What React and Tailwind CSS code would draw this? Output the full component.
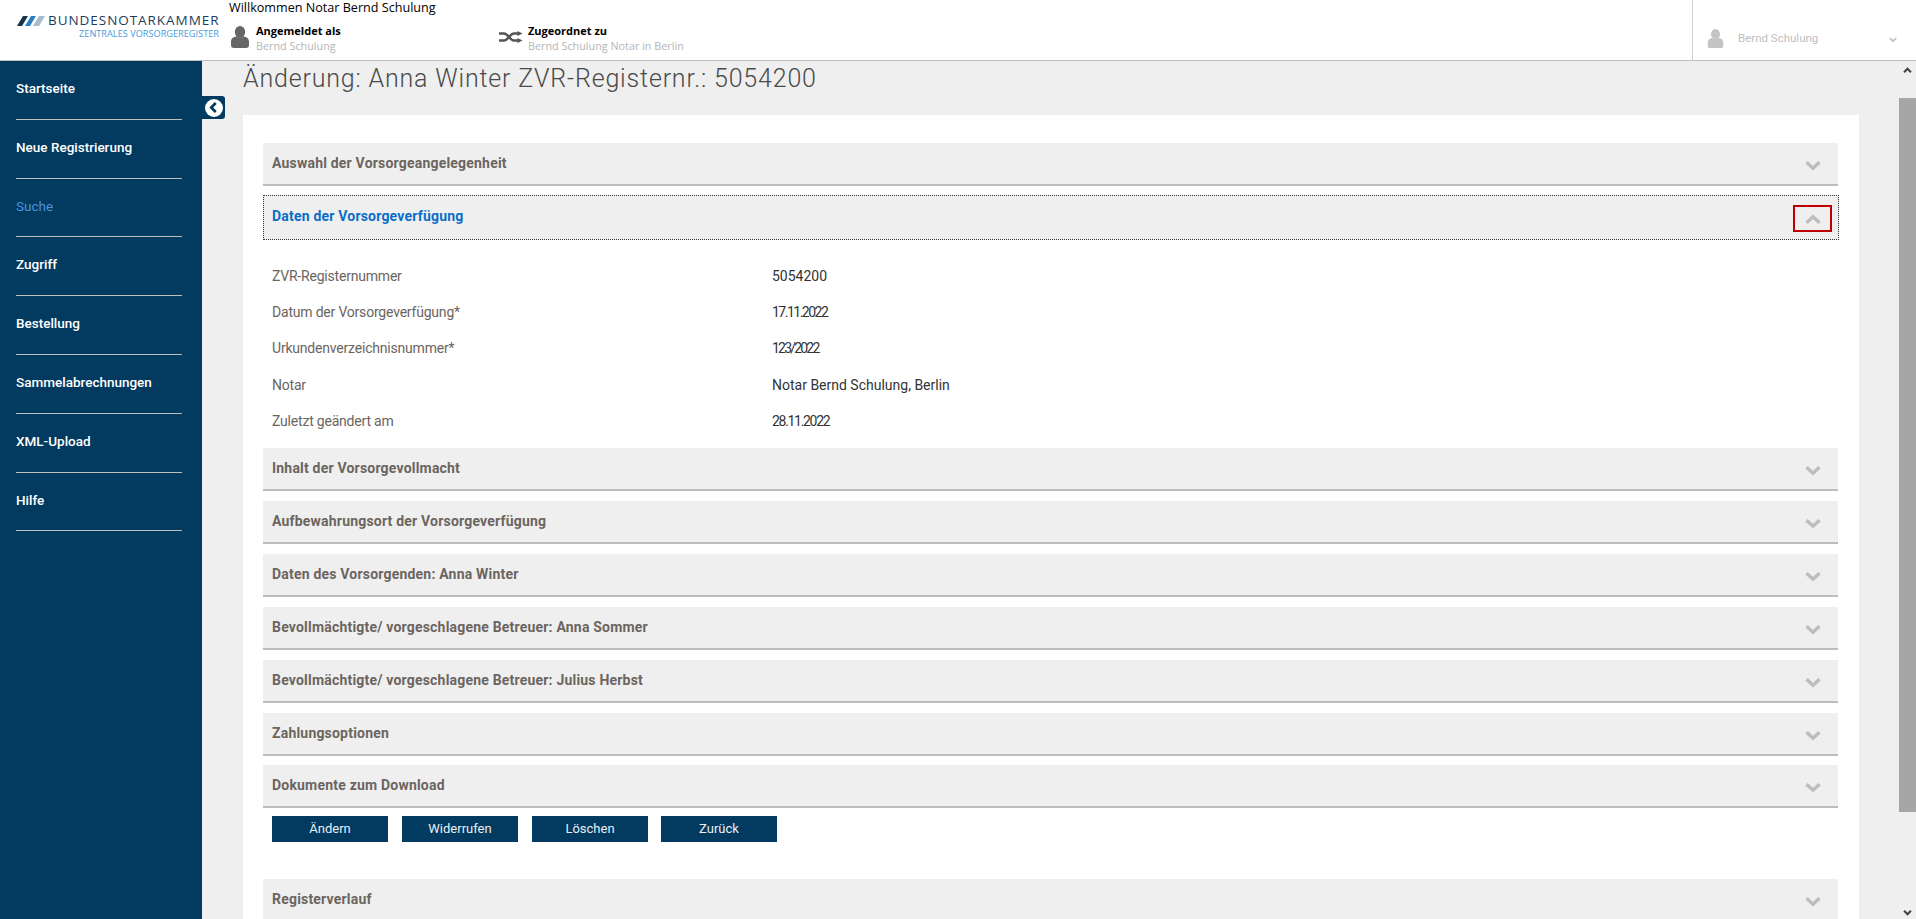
import React from "react";

const F = "font-['Roboto','Noto_Sans',sans-serif]";
const OS = "font-['Open_Sans',sans-serif]";

function Person({ className }) {
  return (
    <svg viewBox="0 0 18 22" className={className} fill="currentColor">
      <ellipse cx="9" cy="6" rx="5.2" ry="6" />
      <path d="M0 15.500c0-3 2.500-4.500 5-5 2.300 1.500 5.700 1.500 8 0 2.500.5 5 2 5 5V19c0 2-1 3-3 3H3c-2 0-3-1-3-3z" />
    </svg>
  );
}

function Shuffle({ className }) {
  return (
    <svg viewBox="0 0 24 12" className={className} fill="none" stroke="currentColor" strokeWidth="2.500">
      <path d="M0 2.500h5c4 0 6 7 10 7h4" />
      <path d="M0 9.500h5c4 0 6-7 10-7h4" />
      <path d="M18.500 0l5 2.500-5 2.500zM18.500 7l5 2.500-5 2.500z" fill="currentColor" stroke="none" />
    </svg>
  );
}

function Chevron({ up, className }) {
  return (
    <svg viewBox="0 0 16 10" className={className} fill="none" stroke="currentColor" strokeWidth="3.500">
      <path d={up ? "M1.500 8.800L8 2.800l6.500 6" : "M1.500 1.200L8 7.200l6.500-6"} />
    </svg>
  );
}

function Logo() {
  return (
    <div className="w-[221px] pl-[17px] pt-[12px] shrink-0">
      <div className="flex items-center gap-[3px] h-[17px]">
        <svg viewBox="0 0 28 10" className="w-[28px] h-[10px] shrink-0">
          <path d="M6 0h5L5 10H0z" fill="#14344f" />
          <path d="M14 0h5l-6 10H8z" fill="#2a7dc0" />
          <path d="M22 0h6l-6 10h-6z" fill="#a9bcc9" />
        </svg>
        <span className={`text-[13.500px] leading-none tracking-[0.95px] font-medium text-[#1c3e5c] whitespace-nowrap ${OS}`}>BUNDESNOTARKAMMER</span>
      </div>
      <div className={`text-right pr-[2px] text-[9.200px] leading-none text-[#4a9ad9] whitespace-nowrap ${OS}`}>ZENTRALES VORSORGEREGISTER</div>
    </div>
  );
}

function Header() {
  return (
    <header className="h-[61px] shrink-0 flex bg-white border-b border-[#bdbdbd]">
      <Logo />
      <div className={`flex-1 pl-[8px] min-w-0 ${OS}`}>
        <div className="text-[12.600px] leading-[16px] text-black">Willkommen Notar Bernd Schulung</div>
        <div className="flex mt-[8px]">
          <div className="w-[270px] flex gap-[7px] pl-[2px]">
            <Person className="w-[18px] h-[22px] text-[#666] mt-[2px]" />
            <div>
              <div className="text-[11px] leading-[14px] font-bold text-black">Angemeldet als</div>
              <div className="text-[10.800px] leading-[16px] text-[#b5b5b5]">Bernd Schulung</div>
            </div>
          </div>
          <div className="flex gap-[5px]">
            <Shuffle className="w-[24px] h-[12px] text-[#555] mt-[7px]" />
            <div>
              <div className="text-[11px] leading-[14px] font-bold text-black">Zugeordnet zu</div>
              <div className="text-[10.800px] leading-[16px] text-[#b5b5b5]">Bernd Schulung Notar in Berlin</div>
            </div>
          </div>
        </div>
      </div>
      <div className="w-[224px] shrink-0 border-l border-[#d0d0d0] flex items-center pl-[14px] pr-[19px] pt-[17px]">
        <Person className="w-[17px] h-[19px] text-[#c4c4c4]" />
        <span className="ml-[14px] text-[11.500px] text-[#c0c0c0] flex-1">Bernd Schulung</span>
        <Chevron className="w-[8px] h-[6px] text-[#bdbdbd] mt-[3px]" />
      </div>
    </header>
  );
}

const menu = ["Startseite", "Neue Registrierung", "Suche", "Zugriff", "Bestellung", "Sammelabrechnungen", "XML-Upload", "Hilfe"];

function Sidebar() {
  return (
    <nav className="w-[202px] shrink-0 bg-[#033a5f] pl-[16px] pr-[20px]">
      {menu.map((m) => (
        <div key={m} className="h-[58.800px] border-b border-[#bdbdbd] pt-[15px]">
          <span className={`text-[13.500px] leading-[20px] font-medium ${m === "Suche" ? "text-[#4a94dc] font-normal" : "text-white"}`}>{m}</span>
        </div>
      ))}
    </nav>
  );
}

function AccordionHead({ title, open, className = "" }) {
  return (
    <div className={`flex items-center justify-between ${open ? "h-[45px] border border-dotted border-[#333] mb-[8px] w-[1576px] pl-[8px]" : "h-[43px] border-b-2 border-[#bdbdbd] pl-[9px]"} bg-[#efefef] pr-[17px] ${className}`}>
      <span className={`text-[14px] font-bold tracking-[0.2px] ${open ? "text-[#0a6ec8] -mt-[2px]" : "text-[#6b6560]"}`}>{title}</span>
      {open ? (
        <div className="w-[39px] h-[27px] border-2 border-[#c00000] flex items-center justify-center -mr-[11px] mt-[2px]">
          <Chevron up className="w-[16px] h-[10px] text-[#bdbdbd]" />
        </div>
      ) : (
        <Chevron className="w-[16px] h-[10px] text-[#bdbdbd] mt-[5px]" />
      )}
    </div>
  );
}

const rows = [
  ["ZVR-Registernummer", "5054200", ""],
  ["Datum der Vorsorgeverfügung*", "17.11.2022", "tracking-[-1.5px]"],
  ["Urkundenverzeichnisnummer*", "123/2022", "tracking-[-1.8px]"],
  ["Notar", "Notar Bernd Schulung, Berlin", ""],
  ["Zuletzt geändert am", "28.11.2022", "tracking-[-1.3px]"],
];

const others = [
  ["Aufbewahrungsort der Vorsorgeverfügung", "mt-[10px]"],
  ["Daten des Vorsorgenden: Anna Winter", "mt-[10px]"],
  ["Bevollmächtigte/ vorgeschlagene Betreuer: Anna Sommer", "mt-[10px]"],
  ["Bevollmächtigte/ vorgeschlagene Betreuer: Julius Herbst", "mt-[10px]"],
  ["Zahlungsoptionen", "mt-[10px]"],
  ["Dokumente zum Download", "mt-[9px]"],
];

function Main() {
  return (
    <main className="flex-1 min-w-0 bg-[#efefef] relative overflow-hidden pl-[41px] pr-[40px]">
      <button className="absolute left-0 top-[35px] w-[23px] h-[23px] bg-[#033a5f] rounded-r-[3px] flex items-center justify-center">
        <span className="w-[18px] h-[18px] rounded-full bg-white flex items-center justify-center">
          <svg viewBox="0 0 10 12" className="w-[9px] h-[11px]" fill="none" stroke="#033a5f" strokeWidth="3"><path d="M7.500 1L2.500 6l5 5" /></svg>
        </span>
      </button>
      <h1 className="text-[25px] leading-[36px] font-light text-[#4a4a4a] tracking-[0.82px] whitespace-nowrap">Änderung: Anna Winter ZVR-Registernr.: 5054200</h1>
      <section className="bg-white mt-[18px] pt-[28px] pl-[20px] pr-[21px]">
        <AccordionHead title="Auswahl der Vorsorgeangelegenheit" className="mb-[9px]" />
        <AccordionHead title="Daten der Vorsorgeverfügung" open />
        <div className="pt-[10px]">
          {rows.map(([k, v, t]) => (
            <div key={k} className="flex h-[36.300px] items-center pl-[9px] text-[14px]">
              <span className="w-[500px] text-[#6b6560] tracking-[-0.2px]">{k}</span>
              <span className={`text-[#333] ${t}`}>{v}</span>
            </div>
          ))}
        </div>
        <AccordionHead title="Inhalt der Vorsorgevollmacht" className="mt-[8.500px]" />
        {others.map(([t, m]) => (
          <AccordionHead key={t} title={t} className={m} />
        ))}
        <div className="flex pl-[9px] mt-[8px] mb-[37px]">
          {[["Ändern", "mr-[14px]"], ["Widerrufen", "mr-[14px]"], ["Löschen", "mr-[13px]"], ["Zurück", ""]].map(([b, m]) => (
            <button key={b} className={`w-[116px] h-[26px] bg-[#033a5f] text-[#e8f0f5] text-[13px] ${m}`}>{b}</button>
          ))}
        </div>
        <AccordionHead title="Registerverlauf" />
      </section>
    </main>
  );
}

function Scrollbar() {
  return (
    <aside className="w-[17px] shrink-0 bg-[#efefef] flex flex-col items-center">
      <svg viewBox="0 0 10 7" className="w-[9px] h-[6px] mt-[6px] text-[#444]" fill="none" stroke="currentColor" strokeWidth="2.500"><path d="M1 6l4-4 4 4" /></svg>
      <div className="w-full h-[714px] mt-[25px] bg-[#a6a6a6]" />
      <svg viewBox="0 0 10 7" className="w-[9px] h-[6px] mt-auto mb-[3px] text-[#444]" fill="none" stroke="currentColor" strokeWidth="2.500"><path d="M1 1l4 4 4-4" /></svg>
    </aside>
  );
}

export default function App() {
  return (
    <div className={`h-[919px] w-[1916px] overflow-hidden flex flex-col bg-white ${F}`}>
      <Header />
      <div className="flex flex-1 min-h-0">
        <Sidebar />
        <Main />
        <Scrollbar />
      </div>
    </div>
  );
}
